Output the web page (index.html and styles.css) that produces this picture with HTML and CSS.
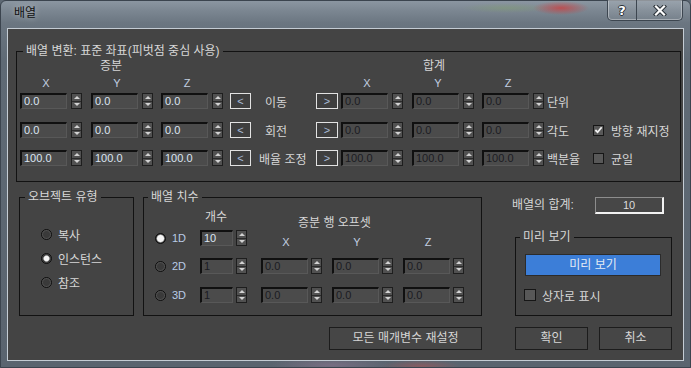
FILE: index.html
```html
<!DOCTYPE html>
<html lang="ko">
<head>
<meta charset="utf-8">
<title>배열</title>
<link rel="stylesheet" href="styles.css">
</head>
<body>
<div class="window">
  <div class="titlebar">
    <span class="title">배열</span>
    <div class="capbtns">
      <div class="cap help">?</div>
      <div class="cap close">
        <svg width="14" height="11" viewBox="0 0 14 11"><path d="M3 1.5 L11 9.5 M11 1.5 L3 9.5" stroke="#2a3138" stroke-width="4.2" stroke-linecap="square"/><path d="M3 1.5 L11 9.5 M11 1.5 L3 9.5" stroke="#fff" stroke-width="2.2" stroke-linecap="square"/></svg>
      </div>
    </div>
  </div>
  <div class="client">
    <div class="group g1">
      <div class="legend lg1">배열 변환: 표준 좌표(피벗점 중심 사용)</div>
      <div class="hdr"><span class="h-inc">증분</span><span class="h-tot">합계</span></div>
      <div class="axis">
        <span class="axc">X</span><span class="axc ml9">Y</span><span class="axc ml8">Z</span>
        <span class="axgap"></span>
        <span class="axc">X</span><span class="axc ml9">Y</span><span class="axc ml8">Z</span>
      </div>
      <div class="trow r1">
        <div class="combo"><div class="field">0.0</div><div class="spin"><i class="u"></i><i class="d"></i></div></div>
        <div class="combo ml9"><div class="field">0.0</div><div class="spin"><i class="u"></i><i class="d"></i></div></div>
        <div class="combo ml8"><div class="field">0.0</div><div class="spin"><i class="u"></i><i class="d"></i></div></div>
        <div class="arrbtn ml7">&lt;</div>
        <div class="tlabel">이동</div>
        <div class="arrbtn w22">&gt;</div>
        <div class="combo off ml3"><div class="field">0.0</div><div class="spin"><i class="u"></i><i class="d"></i></div></div>
        <div class="combo off ml9"><div class="field">0.0</div><div class="spin"><i class="u"></i><i class="d"></i></div></div>
        <div class="combo off ml8"><div class="field">0.0</div><div class="spin"><i class="u"></i><i class="d"></i></div></div>
        <div class="suffix">단위</div>
      </div>
      <div class="trow r2">
        <div class="combo"><div class="field">0.0</div><div class="spin"><i class="u"></i><i class="d"></i></div></div>
        <div class="combo ml9"><div class="field">0.0</div><div class="spin"><i class="u"></i><i class="d"></i></div></div>
        <div class="combo ml8"><div class="field">0.0</div><div class="spin"><i class="u"></i><i class="d"></i></div></div>
        <div class="arrbtn ml7">&lt;</div>
        <div class="tlabel">회전</div>
        <div class="arrbtn w22">&gt;</div>
        <div class="combo off ml3"><div class="field">0.0</div><div class="spin"><i class="u"></i><i class="d"></i></div></div>
        <div class="combo off ml9"><div class="field">0.0</div><div class="spin"><i class="u"></i><i class="d"></i></div></div>
        <div class="combo off ml8"><div class="field">0.0</div><div class="spin"><i class="u"></i><i class="d"></i></div></div>
        <div class="suffix">각도</div>
        <div class="check on"><svg width="10" height="10" viewBox="0 0 10 10"><path d="M1.5 5 L4 7.5 L8.5 2" fill="none" stroke="#f2f2f2" stroke-width="2"/></svg></div>
        <div class="chklabel">방향 재지정</div>
      </div>
      <div class="trow r3">
        <div class="combo"><div class="field">100.0</div><div class="spin"><i class="u"></i><i class="d"></i></div></div>
        <div class="combo ml9"><div class="field">100.0</div><div class="spin"><i class="u"></i><i class="d"></i></div></div>
        <div class="combo ml8"><div class="field">100.0</div><div class="spin"><i class="u"></i><i class="d"></i></div></div>
        <div class="arrbtn ml7">&lt;</div>
        <div class="tlabel wide">배율 조정</div>
        <div class="arrbtn w22">&gt;</div>
        <div class="combo off ml3"><div class="field">100.0</div><div class="spin"><i class="u"></i><i class="d"></i></div></div>
        <div class="combo off ml9"><div class="field">100.0</div><div class="spin"><i class="u"></i><i class="d"></i></div></div>
        <div class="combo off ml8"><div class="field">100.0</div><div class="spin"><i class="u"></i><i class="d"></i></div></div>
        <div class="suffix">백분율</div>
        <div class="check"></div>
        <div class="chklabel">균일</div>
      </div>
    </div>

    <div class="lower">
      <div class="group gtype">
        <div class="legend lg2">오브젝트 유형</div>
        <div class="rlist">
          <div class="ritem"><span class="radio"></span><span class="rtext">복사</span></div>
          <div class="ritem"><span class="radio sel"></span><span class="rtext">인스턴스</span></div>
          <div class="ritem"><span class="radio"></span><span class="rtext">참조</span></div>
        </div>
      </div>

      <div class="group gdim">
        <div class="legend lg3">배열 치수</div>
        <div class="dbody">
          <div class="dleft">
            <div class="cntlabel">개수</div>
            <div class="drow d1"><span class="radio sel big"></span><span class="dlabel">1D</span>
              <div class="combo cnt"><div class="field">10</div><div class="spin"><i class="u"></i><i class="d"></i></div></div></div>
            <div class="drow d2"><span class="radio"></span><span class="dlabel">2D</span>
              <div class="combo cnt off"><div class="field">1</div><div class="spin"><i class="u"></i><i class="d"></i></div></div></div>
            <div class="drow d3"><span class="radio"></span><span class="dlabel">3D</span>
              <div class="combo cnt off"><div class="field">1</div><div class="spin"><i class="u"></i><i class="d"></i></div></div></div>
          </div>
          <div class="dright">
            <div class="offhdr">증분 행 오프셋</div>
            <div class="oaxis"><span class="oax">X</span><span class="oax">Y</span><span class="oax">Z</span></div>
            <div class="orow o2">
              <div class="combo oc off"><div class="field">0.0</div><div class="spin"><i class="u"></i><i class="d"></i></div></div>
              <div class="combo oc off"><div class="field">0.0</div><div class="spin"><i class="u"></i><i class="d"></i></div></div>
              <div class="combo oc off"><div class="field">0.0</div><div class="spin"><i class="u"></i><i class="d"></i></div></div>
            </div>
            <div class="orow o3">
              <div class="combo oc off"><div class="field">0.0</div><div class="spin"><i class="u"></i><i class="d"></i></div></div>
              <div class="combo oc off"><div class="field">0.0</div><div class="spin"><i class="u"></i><i class="d"></i></div></div>
              <div class="combo oc off"><div class="field">0.0</div><div class="spin"><i class="u"></i><i class="d"></i></div></div>
            </div>
          </div>
        </div>
      </div>

      <div class="rightcol">
        <div class="totrow"><span class="totlabel">배열의 합계:</span><span class="totbox">10</span></div>
        <div class="group gprev">
          <div class="legend lg4">미리 보기</div>
          <div class="bluebtn">미리 보기</div>
          <div class="prow"><div class="check big"></div><span class="chklabel2">상자로 표시</span></div>
        </div>
      </div>
    </div>

    <div class="btnrow">
      <div class="btn reset">모든 매개변수 재설정</div>
      <div class="btn ok">확인</div>
      <div class="btn cancel">취소</div>
    </div>
  </div>
</div>
</body>
</html>
```

FILE: styles.css
```css
* { box-sizing: border-box; }
html, body { margin: 0; padding: 0; }
body {
  width: 691px; height: 368px; overflow: hidden;
  font-family: "Liberation Sans", "Noto Sans CJK KR", sans-serif;
  font-size: 12px; color: #d6d6d6;
  background: #5d6873;
}

.window {
  width: 691px; height: 368px;
  border: 1px solid #3b444e;
  border-radius: 6px 6px 0 0;
  padding: 0 6px 6px;
  display: flex; flex-direction: column;
  background:
    radial-gradient(ellipse 28px 7px at 560px 7px, rgba(205,60,60,.75), rgba(205,60,60,0)),
    radial-gradient(ellipse 45px 5px at 505px 7px, rgba(130,160,110,.45), rgba(130,160,110,0)),
    radial-gradient(ellipse 60px 8px at 330px 364px, rgba(150,120,150,.5), rgba(150,120,150,0)),
    radial-gradient(ellipse 40px 6px at 420px 365px, rgba(190,80,80,.45), rgba(190,80,80,0)),
    linear-gradient(180deg, #8b96a1 0px, #7b8691 10px, #6b7681 22px, #5f6a75 60px, #5a646f 100%);
}

.titlebar { height: 27px; display: flex; align-items: flex-start; }
.title {
  padding-left: 7px; line-height: 24px; font-size: 12px; color: #111;
  text-shadow: 0 0 6px rgba(255,255,255,.55);
}
.capbtns {
  margin-left: auto; margin-right: 1px; margin-top: -1px;
  display: flex; height: 21px;
  border: 1px solid #3d4650; border-top: none;
  border-radius: 0 0 5px 5px; overflow: hidden;
  box-shadow: inset 0 0 0 1px rgba(255,255,255,.35);
  background: linear-gradient(180deg, rgba(255,255,255,.12), rgba(255,255,255,.05));
}
.cap { height: 20px; display: flex; align-items: center; justify-content: center; }
.help {
  width: 29px; border-right: 1px solid #3d4650;
  font-family: "DejaVu Sans", sans-serif; font-weight: bold; font-size: 13px; color: #fff;
  text-shadow: 1px 0 0 #2a3138, -1px 0 0 #2a3138, 0 1px 0 #2a3138, 0 -1px 0 #2a3138;
}
.close { width: 45px; }

.client {
  flex: 1;
  border: 1px solid #c4ccd4;
  background: #444444;
  display: flex; flex-direction: column;
}

.group { border: 1px solid #121212; display: flex; flex-direction: column; }
.legend {
  align-self: flex-start;
  margin-top: -8px; height: 15px; line-height: 15px;
  padding: 0 3px; background: #444444; white-space: nowrap; color: #d8d8d8;
}

/* transform group */
.g1 { margin: 22px 0 0 8px; width: 665px; height: 131px; }
.lg1 { margin-left: 6px; }
.hdr { display: flex; height: 14px; line-height: 14px; }
.h-inc { width: 406px; padding-left: 83px; }
.axis { display: flex; height: 14px; line-height: 14px; margin-top: 3px; padding-left: 3px; }
.axc { width: 62px; padding-right: 10px; text-align: center; font-size: 11px; color: #c2cfe0; }
.axgap { width: 118px; }

.trow { display: flex; align-items: center; height: 16px; padding-left: 3px; }
.r1 { margin-top: 3px; }
.r2 { margin-top: 13px; }
.r3 { margin-top: 12px; }

.ml3 { margin-left: 3px; }
.ml7 { margin-left: 7px; }
.ml8 { margin-left: 8px; }
.ml9 { margin-left: 9px; }

.combo { display: flex; align-items: center; gap: 4px; }
.field {
  width: 47px; height: 16px;
  border-top: 2px solid #101010; border-left: 2px solid #101010;
  border-right: 1px solid #585858; border-bottom: 1px solid #585858;
  background: #4b4b4b;
  font-size: 11px; line-height: 13px; padding-left: 2px;
  color: #dbe5f2; white-space: nowrap; overflow: hidden;
}
.combo.off .field { color: #1b1b22; }
.spin {
  width: 11px; height: 16px;
  border: 1px solid #1e1e1e; background: #515151;
  display: flex; flex-direction: column;
}
.spin i { flex: 1; display: flex; align-items: center; justify-content: center; }
.spin i.u { border-bottom: 1px solid #2a2a2a; }
.spin i.u::after {
  content: ""; width: 0; height: 0;
  border-left: 3px solid transparent; border-right: 3px solid transparent;
  border-bottom: 3px solid #d2d2d2;
}
.spin i.d::after {
  content: ""; width: 0; height: 0;
  border-left: 3px solid transparent; border-right: 3px solid transparent;
  border-top: 3px solid #d2d2d2;
}

.arrbtn {
  width: 21px; height: 16px;
  border: 1px solid #e2e2e2; background: #3f3f3f;
  font-size: 11px; line-height: 14px; text-align: center; color: #a9bcd8;
}
.w22 { width: 22px; }
.tlabel { width: 65px; padding-left: 14px; white-space: nowrap; }
.tlabel.wide { padding-left: 8px; }
.suffix { margin-left: 3px; width: 46px; white-space: nowrap; }

.check {
  width: 11px; height: 11px;
  border: 1px solid #161616; background: #585858;
  display: flex; align-items: center; justify-content: center;
}
.check.big { width: 12px; height: 12px; }
.chklabel { margin-left: 7px; white-space: nowrap; }

/* lower groups */
.lower { display: flex; align-items: flex-start; margin-top: 15px; padding-left: 11px; }
.gtype { width: 115px; height: 119px; }
.lg2 { margin-left: 5px; }
.rlist { margin-top: 21px; padding-left: 21px; display: flex; flex-direction: column; gap: 8px; }
.ritem { display: flex; align-items: center; height: 16px; }
.rtext { margin-left: 6px; white-space: nowrap; }
.radio {
  width: 11px; height: 11px; border-radius: 50%;
  border: 1px solid #0e0e0e;
  background: radial-gradient(circle, #3a3a3a 0 3px, #5a5a5a 4.5px);
  flex: none;
}
.radio.sel { background: radial-gradient(circle, #f4f4f4 0 2.2px, #9a9a9a 3px, #3a3a3a 3.6px, #4e4e4e 5px); }
.radio.big { background: radial-gradient(circle, #f4f4f4 0 3px, #b0b0b0 3.6px, #3c3c3c 4.4px); }

.gdim { margin-left: 9px; width: 339px; height: 119px; }
.lg3 { margin-left: 4px; }
.dbody { display: flex; }
.dleft { width: 117px; display: flex; flex-direction: column; }
.cntlabel { margin-top: 5px; margin-left: 61px; height: 14px; line-height: 14px; }
.drow { display: flex; align-items: center; height: 16px; padding-left: 11px; }
.d1 { margin-top: 6px; }
.d2 { margin-top: 12px; }
.d3 { margin-top: 13px; }
.dlabel { margin-left: 6px; width: 28px; font-size: 11px; color: #b9cbe6; }
.combo.cnt { gap: 3px; }
.combo.cnt .field { width: 33px; }

.dright { display: flex; flex-direction: column; }
.offhdr { margin-top: 11px; height: 14px; line-height: 14px; padding-left: 37px; white-space: nowrap; }
.oaxis { display: flex; margin-top: 6px; height: 12px; line-height: 12px; gap: 10px; }
.oax { width: 61px; padding-right: 11px; text-align: center; font-size: 11px; color: #c2cfe0; }
.orow { display: flex; height: 16px; gap: 10px; }
.o2 { margin-top: 10px; }
.o3 { margin-top: 13px; }
.combo.oc { gap: 3px; }

.rightcol { margin-left: 30px; width: 160px; display: flex; flex-direction: column; }
.totrow { display: flex; height: 17px; align-items: center; }
.totlabel { width: 83px; white-space: nowrap; line-height: 17px; }
.totbox {
  width: 69px; height: 17px;
  border-top: 1px solid #8d8d8d; border-left: 1px solid #8d8d8d;
  border-right: 2px solid #f2f2f2; border-bottom: 2px solid #f2f2f2;
  background: #474747; text-align: center; font-size: 11px; line-height: 14px; color: #dcdcdc;
}
.gprev { margin-top: 23px; margin-left: 3px; width: 157px; height: 79px; }
.lg4 { margin-left: 4px; }
.bluebtn {
  margin: 9px 0 0 9px; width: 136px; height: 22px;
  border: 1px solid #2b2b2b; background: #3c7ed8;
  text-align: center; line-height: 20px; color: #e3eaf4;
}
.prow { display: flex; align-items: center; margin-top: 13px; margin-left: 8px; height: 12px; }
.chklabel2 { margin-left: 6px; white-space: nowrap; }

.btnrow { display: flex; margin-top: 11px; padding-left: 321px; height: 23px; }
.btn {
  height: 23px; border: 1px solid #1c1c1c; background: #464646;
  text-align: center; line-height: 21px; white-space: nowrap; color: #d6d6d6;
}
.reset { width: 153px; }
.ok { width: 73px; margin-left: 33px; }
.cancel { width: 73px; margin-left: 11px; }
```
